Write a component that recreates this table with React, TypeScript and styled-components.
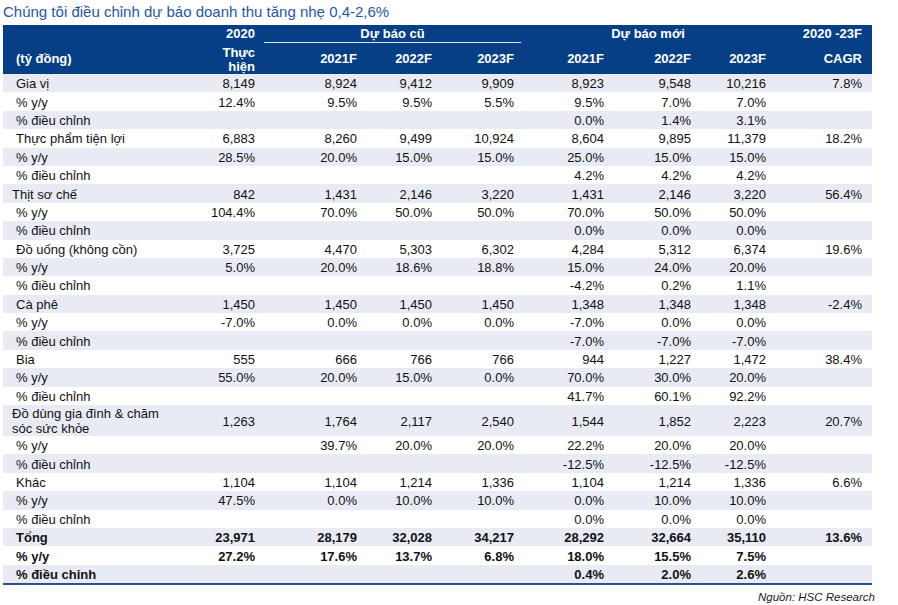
import React from 'react'
import styled, { createGlobalStyle } from 'styled-components'

const COLS = '187px 73px 102px 75px 82px 90px 87px 75px 98px'

type Line = {
  label: string
  vals: string[]
  main?: boolean
  tight?: boolean
}

const cat = (label: string, base: string[], yy: string[], adj: string[], tight = false): Line[] => [
  { label, vals: base, main: true, tight },
  { label: '% y/y', vals: yy },
  { label: '% điều chỉnh', vals: ['', '', '', '', ...adj, ''] },
]

const groups: Line[][] = [
  cat('Gia vị',
    ['8,149', '8,924', '9,412', '9,909', '8,923', '9,548', '10,216', '7.8%'],
    ['12.4%', '9.5%', '9.5%', '5.5%', '9.5%', '7.0%', '7.0%', ''],
    ['0.0%', '1.4%', '3.1%']),
  cat('Thực phẩm tiện lợi',
    ['6,883', '8,260', '9,499', '10,924', '8,604', '9,895', '11,379', '18.2%'],
    ['28.5%', '20.0%', '15.0%', '15.0%', '25.0%', '15.0%', '15.0%', ''],
    ['4.2%', '4.2%', '4.2%']),
  cat('Thịt sơ chế',
    ['842', '1,431', '2,146', '3,220', '1,431', '2,146', '3,220', '56.4%'],
    ['104.4%', '70.0%', '50.0%', '50.0%', '70.0%', '50.0%', '50.0%', ''],
    ['0.0%', '0.0%', '0.0%'], true),
  cat('Đồ uống (không cồn)',
    ['3,725', '4,470', '5,303', '6,302', '4,284', '5,312', '6,374', '19.6%'],
    ['5.0%', '20.0%', '18.6%', '18.8%', '15.0%', '24.0%', '20.0%', ''],
    ['-4.2%', '0.2%', '1.1%']),
  cat('Cà phê',
    ['1,450', '1,450', '1,450', '1,450', '1,348', '1,348', '1,348', '-2.4%'],
    ['-7.0%', '0.0%', '0.0%', '0.0%', '-7.0%', '0.0%', '0.0%', ''],
    ['-7.0%', '-7.0%', '-7.0%']),
  cat('Bia',
    ['555', '666', '766', '766', '944', '1,227', '1,472', '38.4%'],
    ['55.0%', '20.0%', '15.0%', '0.0%', '70.0%', '30.0%', '20.0%', ''],
    ['41.7%', '60.1%', '92.2%']),
  cat('Đồ dùng gia đình & chăm sóc sức khỏe',
    ['1,263', '1,764', '2,117', '2,540', '1,544', '1,852', '2,223', '20.7%'],
    ['', '39.7%', '20.0%', '20.0%', '22.2%', '20.0%', '20.0%', ''],
    ['-12.5%', '-12.5%', '-12.5%'], true),
  cat('Khác',
    ['1,104', '1,104', '1,214', '1,336', '1,104', '1,214', '1,336', '6.6%'],
    ['47.5%', '0.0%', '10.0%', '10.0%', '0.0%', '10.0%', '10.0%', ''],
    ['0.0%', '0.0%', '0.0%']),
]

const total = cat('Tổng',
  ['23,971', '28,179', '32,028', '34,217', '28,292', '32,664', '35,110', '13.6%'],
  ['27.2%', '17.6%', '13.7%', '6.8%', '18.0%', '15.5%', '7.5%', ''],
  ['0.4%', '2.0%', '2.6%'])

const rows = [
  ...groups.flat().map(r => ({ ...r, bold: false })),
  ...total.map(r => ({ ...r, bold: true })),
]

const App = () => {
  return (
    <Page>
      <GlobalStyle />
      <Title>Chúng tôi điều chỉnh dự báo doanh thu tăng nhẹ 0,4-2,6%</Title>
      <Table>
        <Head>
          <HeadTop>
            <span />
            <HeadCell>2020</HeadCell>
            <Group>Dự báo cũ</Group>
            <Group $plain>Dự báo mới</Group>
            <HeadCell $last>2020 -23F</HeadCell>
          </HeadTop>
          <HeadBottom>
            <HeadLabel>(tỷ đồng)</HeadLabel>
            <HeadCell $stack>Thực<br />hiện</HeadCell>
            <HeadCell>2021F</HeadCell>
            <HeadCell>2022F</HeadCell>
            <HeadCell>2023F</HeadCell>
            <HeadCell>2021F</HeadCell>
            <HeadCell>2022F</HeadCell>
            <HeadCell>2023F</HeadCell>
            <HeadCell $last>CAGR</HeadCell>
          </HeadBottom>
        </Head>
        {rows.map((r, i) => {
          const tall = r.label.length > 30
          return (
            <Row key={i} $shade={i % 2 === 0} $tall={tall} $bold={r.bold}>
              <Label $tight={!!r.tight}>{r.label}</Label>
              {r.vals.map((v, j) => (
                <Cell key={j} $last={j === r.vals.length - 1}>{v}</Cell>
              ))}
            </Row>
          )
        })}
      </Table>
      <Source>Nguồn: HSC Research</Source>
    </Page>
  )
}

export default App

const GlobalStyle = createGlobalStyle`
  body {
    margin: 0;
    background: #fff;
    font-family: "Liberation Sans", Arial, sans-serif;
  }
`

const Page = styled.div`
  width: 898px;
  padding: 3px 0 0 3px;
  box-sizing: border-box;
`

const Title = styled.div`
  font-size: 15px;
  line-height: 18px;
  color: #1f58a6;
  margin-bottom: 4px;
`

const Table = styled.div`
  width: 869px;
  display: flex;
  flex-direction: column;
  border-bottom: 2px solid #24538f;
  color: #111;
  font-size: 13px;
`

const Head = styled.div`
  background: #063f86;
  color: #fff;
  font-weight: 700;
  font-size: 13px;
`

const HeadTop = styled.div`
  display: grid;
  grid-template-columns: ${COLS};
  height: 18px;
  align-items: stretch;
`

const HeadBottom = styled.div`
  display: grid;
  grid-template-columns: ${COLS};
  height: 31px;
  align-items: center;
`

const HeadCell = styled.div<{ $last?: boolean; $stack?: boolean }>`
  text-align: right;
  padding-right: ${p => (p.$last ? '10px' : '8px')};
  line-height: ${p => (p.$stack ? '14px' : '17px')};
  padding-top: ${p => (p.$stack ? '2px' : '0')};
`

const Group = styled.div<{ $plain?: boolean }>`
  grid-column: span 3;
  text-align: center;
  line-height: 17px;
  margin: 0 1px;
  border-bottom: 1px solid ${p => (p.$plain ? 'transparent' : '#dfe6f2')};
`

const HeadLabel = styled.div`
  padding-left: 13px;
`

const Row = styled.div<{ $shade: boolean; $tall: boolean; $bold: boolean }>`
  display: grid;
  grid-template-columns: ${COLS};
  align-items: center;
  height: ${p => (p.$tall ? '31px' : '18.4px')};
  background: ${p => (p.$shade ? '#e8ebf3' : '#fff')};
  font-weight: ${p => (p.$bold ? 700 : 400)};
  line-height: 15px;
`

const Label = styled.div<{ $tight: boolean }>`
  padding-left: ${p => (p.$tight ? '9px' : '13px')};
  max-width: 168px;
  padding-top: 1px;
`

const Cell = styled.div<{ $last: boolean }>`
  text-align: right;
  padding-right: ${p => (p.$last ? '10px' : '8px')};
  padding-top: 1px;
`

const Source = styled.div`
  width: 872px;
  text-align: right;
  font-style: italic;
  font-size: 11.5px;
  line-height: 14px;
  margin-top: 5px;
  color: #1a1a1a;
`
